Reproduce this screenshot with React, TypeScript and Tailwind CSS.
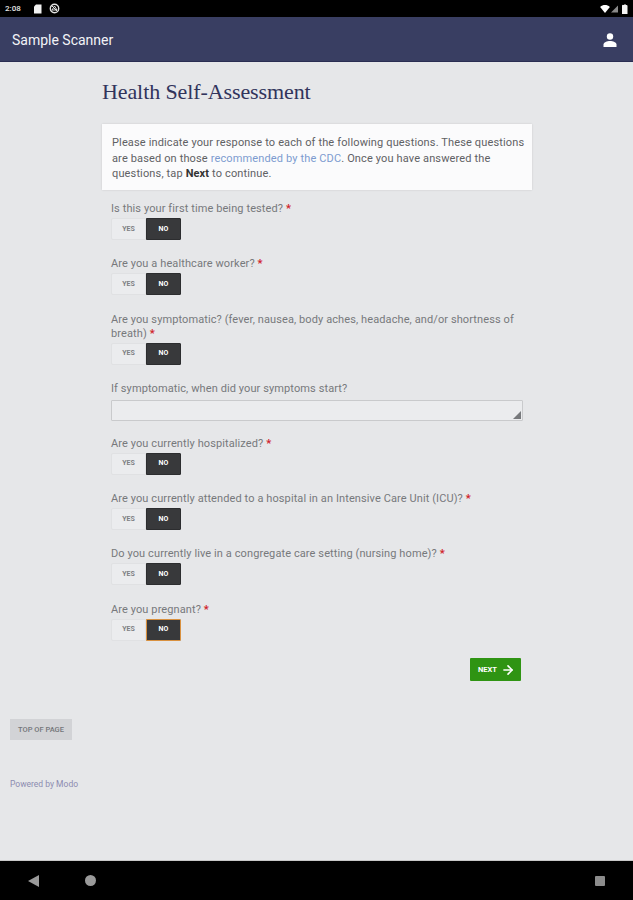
import { ArrowRight } from "lucide-react";

const questions = [
  "Is this your first time being tested?",
  "Are you a healthcare worker?",
  "Are you symptomatic? (fever, nausea, body aches, headache, and/or shortness of breath)",
];

const laterQuestions = [
  "Are you currently hospitalized?",
  "Are you currently attended to a hospital in an Intensive Care Unit (ICU)?",
  "Do you currently live in a congregate care setting (nursing home)?",
  "Are you pregnant?",
];

function YesNo({ focused = false }: { focused?: boolean }) {
  return (
    <div className="flex h-[22px] w-[70px] text-[7px] font-bold leading-none">
      <div className="flex w-[35px] items-center justify-center rounded-l-[2px] border border-[#e0e1e3] bg-[#ebecee] text-[#7d7f83]">
        YES
      </div>
      <div
        className={`flex w-[35px] items-center justify-center rounded-r-[1px] bg-[#38393b] text-white ${
          focused ? "border border-[#d9913f]" : "border border-[#2c2d2f]"
        }`}
      >
        NO
      </div>
    </div>
  );
}

function Question({ label, focused }: { label: string; focused?: boolean }) {
  return (
    <div className="mb-[17.3px]">
      <div className="mb-[2px] text-[11px] leading-[14px] tracking-[0.1px] text-[#77797c]">
        {label} <span className="font-bold text-[#d0202a]">*</span>
      </div>
      <YesNo focused={focused} />
    </div>
  );
}

export default function App() {
  return (
    <div className="flex h-[900px] w-[633px] flex-col overflow-hidden bg-[#e6e7e9] font-['Roboto',sans-serif]">
      {/* Status bar */}
      <div className="flex h-[17px] shrink-0 items-center justify-between bg-black pl-[5px] pr-[5px] text-white">
        <div className="flex items-center">
          <span className="text-[8px] font-medium leading-none text-[#e6e6e6]">2:08</span>
          <svg width="8" height="10" viewBox="0 0 8 10" className="ml-[13px]">
            <path d="M2 0.5h5.5v9h-7.5v-7z" fill="#f2f2f2" />
          </svg>
          <svg width="11" height="11" viewBox="0 0 11 11" className="ml-[7px]">
            <circle cx="5.5" cy="5.5" r="4.2" fill="none" stroke="#e2e2e2" strokeWidth="1.4" />
            <path d="M2.5 2.5l6 6M5.5 3l-2.5 4h5z" stroke="#e2e2e2" strokeWidth="1" fill="none" />
          </svg>
        </div>
        <div className="flex items-center">
          <svg width="10" height="8" viewBox="0 0 11 9">
            <path d="M0 2.2C3.2-.6 7.8-.6 11 2.2L5.5 9z" fill="#fff" />
          </svg>
          <svg width="7" height="8" viewBox="0 0 8 8" className="ml-[1px]">
            <path d="M8 0v8H0z" fill="#8a8a8a" />
          </svg>
          <svg width="6" height="10" viewBox="0 0 6 10" className="ml-[4px]">
            <path d="M1.5 1h1V0h1v1h1a1 1 0 0 1 1 1v8H0V2a1 1 0 0 1 1.5-1z" fill="#f5f5f5" />
          </svg>
        </div>
      </div>

      {/* App header */}
      <div className="flex h-[45px] shrink-0 items-center justify-between border-b border-[#2a2d52] bg-[#393e62] pl-3 pr-[16px] pt-[3px]">
        <span className="text-[14px] font-normal text-[#f2f3f7]">Sample Scanner</span>
        <svg width="14" height="14" viewBox="0 0 14 14" className="-mt-[2px]">
          <circle cx="7" cy="3.5" r="3.2" fill="#fff" />
          <path d="M0.5 14v-2.5C0.5 9.2 4 8 7 8s6.5 1.2 6.5 3.5V14z" fill="#fff" />
        </svg>
      </div>

      {/* Page content */}
      <div className="flex-1 pl-[102px] pr-[101px]">
        <h1 className="mt-[17px] font-['Liberation_Serif',serif] text-[22px] leading-[26px] tracking-[-0.1px] text-[#31345c]">
          Health Self-Assessment
        </h1>

        <div className="mt-[19px] h-[66px] bg-[#fbfbfc] pl-[10px] pr-[4px] pt-[11px] text-[11px] leading-[15.5px] tracking-[0.14px] text-[#5f6164] shadow-[0_0_2px_rgba(0,0,0,0.12)]">
          Please indicate your response to each of the following questions. These questions are based on those{" "}
          <span className="text-[#7d9bd0]">recommended by the CDC</span>. Once you have answered the questions, tap{" "}
          <b className="text-[#333]">Next</b> to continue.
        </div>

        <div className="mt-[12px] pl-[9px] pr-[9px]">
          {questions.map((q) => (
            <Question key={q} label={q} />
          ))}

          <div className="mb-[16px]">
            <div className="mb-[4px] text-[11px] leading-[14px] tracking-[0.1px] text-[#77797c]">
              If symptomatic, when did your symptoms start?
            </div>
            <div className="relative h-[21px] w-[412px] rounded-[1px] border border-[#c9cacc] bg-[#ebecee]">
              <svg width="8" height="8" viewBox="0 0 8 8" className="absolute bottom-[1px] right-[1px]">
                <path d="M8 0v8H0z" fill="#77797c" />
              </svg>
            </div>
          </div>

          {laterQuestions.map((q, i) => (
            <Question key={q} label={q} focused={i === laterQuestions.length - 1} />
          ))}

          <div className="mr-[2px] flex justify-end">
            <div className="flex h-[23px] w-[51px] items-center justify-center gap-[4px] rounded-[1px] bg-[#2f9413] pl-[2px] text-[7.5px] font-bold text-white">
              NEXT
              <ArrowRight size={14} strokeWidth={2.75} />
            </div>
          </div>
        </div>
      </div>

      {/* Footer links */}
      <div className="shrink-0 pb-[70px] pl-[10px]">
        <div className="flex h-[21px] w-[62px] items-center justify-center whitespace-nowrap bg-[#d2d3d6] text-[7.5px] font-medium text-[#74767a]">
          TOP OF PAGE
        </div>
        <div className="mt-[38px] text-[8.5px] leading-[12px] text-[#8c8cb0]">Powered by Modo</div>
      </div>

      {/* Android nav bar */}
      <div className="relative flex h-[40px] shrink-0 items-center border-t border-[#c8c8c8] bg-black">
        <svg width="12" height="12" viewBox="0 0 12 12" className="ml-[28px]">
          <path d="M11 0v12L0 6z" fill="#9a9a9a" />
        </svg>
        <div className="ml-[45px] h-[11px] w-[11px] rounded-full bg-[#9a9a9a]" />
        <div className="ml-auto mr-[28px] h-[10px] w-[10px] rounded-[1px] bg-[#8c8c8c]" />
      </div>
    </div>
  );
}
